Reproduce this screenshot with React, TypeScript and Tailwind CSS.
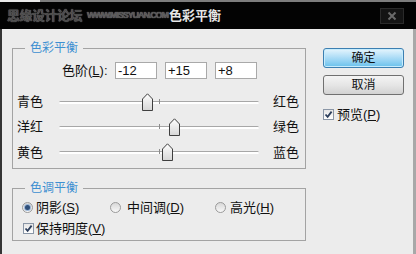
import React from "react";

const FONT = "font-['Liberation_Sans','Noto_Sans_CJK_SC',sans-serif]";

const Thumb = ({ value }: { value: number }) => (
  <svg
    width="11"
    height="18"
    viewBox="0 0 11 18"
    className="absolute top-0"
    style={{ left: 100 + value - 5.5 }}
  >
    <defs>
      <linearGradient id="thumbFill" x1="0" y1="0" x2="0" y2="1">
        <stop offset="0" stopColor="#ffffff" />
        <stop offset="1" stopColor="#d6d6d6" />
      </linearGradient>
    </defs>
    <path
      d="M0.5 6 L5.5 0.8 L10.5 6 V17.5 H0.5 Z"
      fill="url(#thumbFill)"
      stroke="#3f3f3f"
      strokeWidth="1"
      strokeLinejoin="round"
    />
  </svg>
);

const SliderRow = ({
  left,
  right,
  value,
  h,
}: {
  left: string;
  right: string;
  value: number;
  h: string;
}) => (
  <div className={`flex items-center pl-[4px] ${h}`}>
    <span className="w-[42px] leading-none">{left}</span>
    <div className="relative w-[200px] h-[18px]">
      <div className="absolute left-0 right-0 top-[8px] h-[3px] rounded-full border-t border-[#a7a7a7] bg-white" />
      <div className="absolute left-[100px] top-[6px] w-px h-[5px] bg-[#8c8c8c]" />
      <Thumb value={value} />
    </div>
    <span className="ml-[14px] leading-none">{right}</span>
  </div>
);

const Radio = ({ checked }: { checked?: boolean }) => (
  <span className="w-[11px] h-[11px] rounded-full border border-[#9a9a9a] bg-gradient-to-b from-[#d8d8d8] to-[#f8f8f8] flex items-center justify-center">
    {checked && (
      <span className="w-[5px] h-[5px] rounded-full bg-[#2f4f7a] ring-1 ring-[#9bb6d6]" />
    )}
  </span>
);

const Check = () => (
  <span className="w-[11px] h-[11px] border border-[#8a96a6] bg-gradient-to-b from-[#e6e6e6] to-white flex items-center justify-center">
    <svg width="9" height="9" viewBox="0 0 9 9">
      <path
        d="M1.5 4.5 L3.6 6.8 L7.6 1.6"
        fill="none"
        stroke="#2d3f5c"
        strokeWidth="1.8"
      />
    </svg>
  </span>
);

const Group = ({
  title,
  h,
  children,
}: {
  title: string;
  h: string;
  children: React.ReactNode;
}) => (
  <div className={`relative w-[294px] border border-[#a3a3a3] ${h}`}>
    <span className="absolute left-[12px] top-[-8px] px-[5px] bg-[#ececec] text-[12px] leading-[14px] text-[#3d8fd1]">
      {title}
    </span>
    {children}
  </div>
);

const LevelInput = ({ value }: { value: string }) => (
  <div className="w-[42px] h-[17px] border border-[#a9a9a9] bg-white pl-[2px] text-[13px] leading-[15px]">
    {value}
  </div>
);

export default function App() {
  return (
    <div className={`w-[416px] h-[254px] flex flex-col overflow-hidden text-[#111] ${FONT}`}>
      <div className="h-[2px] flex">
        <div className="w-[40px] bg-[#e8e8e8]" />
        <div className="flex-1 bg-[#7d7d7d]" />
      </div>
      <div className="h-[27px] bg-[#030303] flex items-center pl-[7px] pr-[12px]">
        <span className="text-[13px] font-bold text-[#4b4b4b] tracking-[-0.5px] [text-shadow:0_0_1px_#999]">
          思缘设计论坛
        </span>
        <span className="ml-[5px] text-[9px] font-bold text-[#555] tracking-[-1.1px] [text-shadow:0_0_1px_#aaa]">
          WWW.MISSYUAN.COM
        </span>
        <span className="ml-[1px] text-[13px] font-bold text-[#e6e6e6]">
          色彩平衡
        </span>
        <div className="ml-auto w-[24px] h-[16px] border border-[#2a2a2a] bg-[#141414] flex items-center justify-center">
          <svg width="10" height="10" viewBox="0 0 10 10">
            <path d="M1.5 1.5 L8.5 8.5 M8.5 1.5 L1.5 8.5" stroke="#6a6a6a" strokeWidth="2" />
          </svg>
        </div>
      </div>
      <div className="flex-1 flex bg-[#ececec] border-l-[2px] border-l-[#353535] border-r-[3px] border-r-[#a8a8a8] pl-[10px] pt-[19px]">
        <div className="flex flex-col gap-[19px]">
          <Group title="色彩平衡" h="h-[121px]">
            <div className="flex items-center pt-[13px] pl-[49px]">
              <span className="text-[13px] leading-none w-[53px]">
                色阶(<span className="underline">L</span>):
              </span>
              <div className="flex gap-[8px]">
                <LevelInput value="-12" />
                <LevelInput value="+15" />
                <LevelInput value="+8" />
              </div>
            </div>
            <div className="mt-[10px] text-[13px]">
              <SliderRow left="青色" right="红色" value={-12} h="h-[25px]" />
              <SliderRow left="洋红" right="绿色" value={15} h="h-[25px]" />
              <SliderRow left="黄色" right="蓝色" value={8} h="h-[26px]" />
            </div>
          </Group>
          <Group title="色调平衡" h="h-[53px]">
            <div className="pt-[10px] pl-[9px] text-[13px]">
              <div className="flex items-center h-[16px]">
                <div className="w-[88px] flex items-center gap-[3px]">
                  <Radio checked />
                  <span className="leading-none">
                    阴影(<span className="underline">S</span>)
                  </span>
                </div>
                <div className="w-[105px] flex items-center gap-[6px]">
                  <Radio />
                  <span className="leading-none">
                    中间调(<span className="underline">D</span>)
                  </span>
                </div>
                <div className="flex items-center gap-[4px]">
                  <Radio />
                  <span className="leading-none">
                    高光(<span className="underline">H</span>)
                  </span>
                </div>
              </div>
              <div className="flex items-center h-[16px] mt-[5px] gap-[2px] pl-[1px]">
                <Check />
                <span className="leading-none">
                  保持明度(<span className="underline">V</span>)
                </span>
              </div>
            </div>
          </Group>
        </div>
        <div className="ml-[17px] w-[81px] flex flex-col">
          <button className="h-[20px] rounded-[3px] border border-[#3c7fb1] bg-gradient-to-b from-[#e5f5fd] via-[#a9dbf6] to-[#67c1ec] text-[12px] leading-none shadow-[inset_0_0_0_1px_#c6ecfd]">
            确定
          </button>
          <button className="mt-[7px] h-[20px] rounded-[3px] border border-[#707070] bg-gradient-to-b from-[#f4f4f4] via-[#e6e6e6] to-[#d2d2d2] text-[12px] leading-none">
            取消
          </button>
          <div className="mt-[13px] flex items-center gap-[3px] text-[13px]">
            <Check />
            <span className="leading-none">
              预览(<span className="underline">P</span>)
            </span>
          </div>
        </div>
      </div>
    </div>
  );
}
